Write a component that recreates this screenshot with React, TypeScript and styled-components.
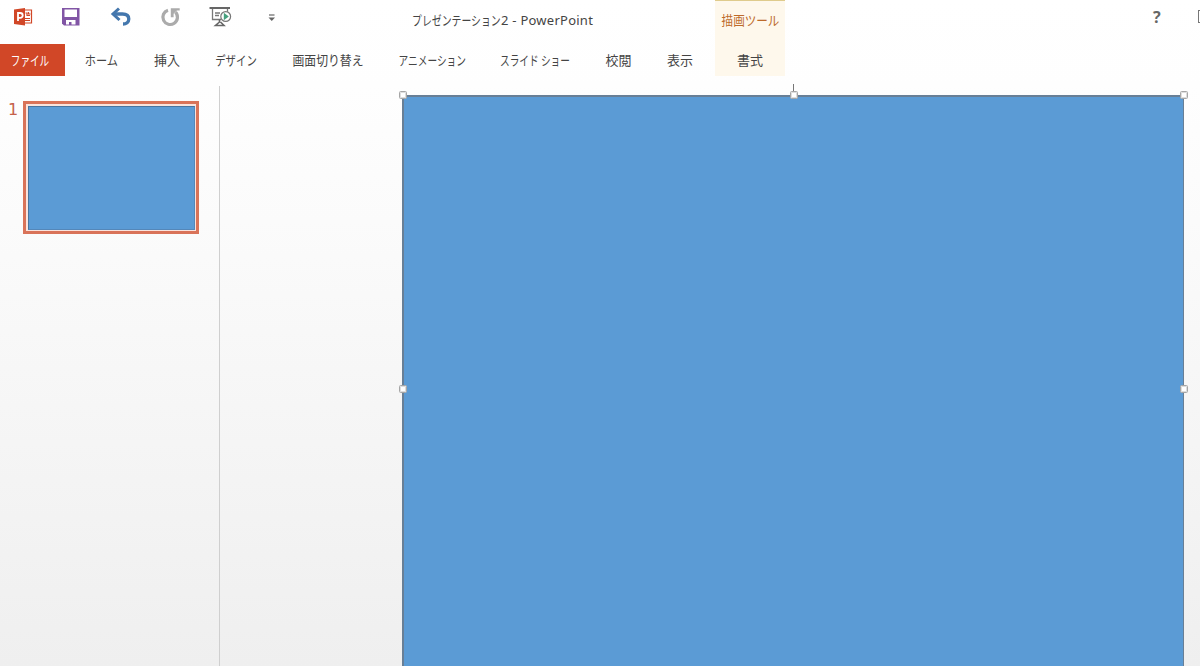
import React from "react";
import styled, { createGlobalStyle } from "styled-components";

const GlobalStyle = createGlobalStyle`
  html, body { margin: 0; height: 100%; overflow: hidden; }
  #root { height: 100%; }
  * { box-sizing: border-box; }
`;

const Window = styled.div`
  height: 666px;
  display: flex;
  flex-direction: column;
  overflow: hidden;
  background: linear-gradient(#fff 0, #fefefe 86px, #fbfbfb 220px, #efefef 666px);
  color: #444;
  font: 13px/20px "Noto Sans", "Noto Sans CJK JP", sans-serif;
`;

const Ribbon = styled.header`
  height: 86px;
  flex: none;
  display: grid;
  grid-template-columns: 292px 423px 70px 1fr;
  grid-template-rows: 44px 32px;
`;

const QuickAccess = styled.div`
  display: flex;
  padding-top: 5px;
`;

const ToolButton = styled.div<{ $w: number }>`
  width: ${(p) => p.$w}px;
  height: 24px;
  svg { display: block; }
`;

const Title = styled.div`
  display: flex;
  padding: 10px 0 0 120px;
  white-space: pre;
`;

const Fit = styled.span<{ $scale?: number; $origin?: string }>`
  display: inline-block;
  white-space: pre;
  font-family: "Noto Sans CJK JP", sans-serif;
  transform: scaleX(${(p) => p.$scale ?? 1});
  transform-origin: ${(p) => p.$origin ?? "center"};
`;

const TitleName = styled.span`
  width: 89px;
`;

const TitleApp = styled.span`
  letter-spacing: 0.25px;
`;

const ContextGroup = styled.div`
  display: flex;
  justify-content: center;
  padding: 9px 0 0 1px;
  background: #fef8ec;
  border-top: 1px solid #dfcb8c;
  color: #bd6a2a;
`;

const WindowControls = styled.div`
  display: flex;
  justify-content: space-between;
  padding: 7px 0 0 368px;
`;

const Help = styled.span`
  font: bold 16px/20px "Noto Sans", sans-serif;
  color: #666;
`;

const RestoreEdge = styled.span`
  width: 2px;
  height: 13px;
  margin-top: 3px;
  border: 1px solid #777;
  border-right: 0;
`;

const Tabs = styled.nav`
  grid-column: 1 / -1;
  display: flex;
`;

const Tab = styled.div<{ $w: number; $kind?: "file" | "context" }>`
  width: ${(p) => p.$w}px;
  flex: none;
  display: flex;
  justify-content: center;
  align-items: center;
  ${(p) => p.$kind === "file" && "background: #d14727; color: #fff; padding-right: 5px; margin-right: 2px;"}
  ${(p) => p.$kind === "context" && "background: #fef8ec; margin-left: 5px;"}
`;

const Workspace = styled.main`
  flex: 1;
  display: flex;
  min-height: 0;
`;

const Thumbnails = styled.aside`
  width: 220px;
  flex: none;
  display: flex;
  align-items: flex-start;
  border-right: 1px solid #cfcfcf;
  padding-top: 15px;
`;

const SlideNumber = styled.span`
  width: 23px;
  padding-left: 8px;
  font: 16px/18px "DejaVu Sans", sans-serif;
  color: #c5614a;
`;

const Thumbnail = styled.div`
  width: 176px;
  height: 133px;
  border: 3px solid #d97359;
  padding: 2px 1px 1px 2px;
  background: #f9e3dd;
`;

const ThumbnailSlide = styled.div`
  height: 100%;
  border: 1px solid #47759f;
  border-right-color: #5487b9;
  border-bottom-color: #5487b9;
  background: #5b9bd5;
`;

const Editor = styled.section`
  flex: 1;
  padding: 9px 0 0 182px;
`;

const Shape = styled.div`
  position: relative;
  width: 782px;
  height: 587px;
  background: #5b9bd5;
  border: 1px solid #687f96;
  border-width: 2px 1px 1px 2px;
`;

const Handle = styled.i<{ $x: number; $y: number }>`
  position: absolute;
  left: ${(p) => p.$x - 6}px;
  top: ${(p) => p.$y - 6}px;
  width: 8px;
  height: 8px;
  border: 1px solid #a6a6a6;
  box-shadow: inset 0 0 0 1px #dedede;
  border-radius: 1.5px;
  background: #fff;
`;

const RotateStem = styled.i`
  position: absolute;
  left: 389px;
  top: -13px;
  width: 1px;
  height: 9px;
  background: #777;
`;

const tabs = [
  { text: "ホーム", w: 69, s: 0.86 },
  { text: "挿入", w: 62, s: 1 },
  { text: "デザイン", w: 77, s: 0.8 },
  { text: "画面切り替え", w: 106, s: 0.91 },
  { text: "アニメーション", w: 102, s: 0.745 },
  { text: "スライド ショー", w: 104, s: 0.745 },
  { text: "校閲", w: 63, s: 1 },
  { text: "表示", w: 60, s: 1 },
];

const PowerPointIcon = () => (
  <svg width="46" height="24" viewBox="0 5 46 24">
    <path d="M24 10h7.500v13H24" fill="#fff" stroke="#d14727" strokeWidth="1.200" />
    <path d="M25.500 13h1.500v2.500h3M28.500 12v2h2M25 18.500h5M25 20.500h5" fill="none" stroke="#d14727" strokeWidth="1.200" />
    <path d="M14 9.500 25 8v17.500L14 24z" fill="#d14727" />
    <path d="M18 21v-8h2.300a2.200 2.200 0 0 1 0 4.800H18" fill="none" stroke="#fff" strokeWidth="1.800" />
  </svg>
);

const SaveIcon = () => (
  <svg width="50" height="24" viewBox="46 5 50 24">
    <path d="M62 8h17.500v17.500H64L62 23.500z" fill="#8155a5" />
    <path d="M64.500 9.500h12.500v7.500H64.500zM66 20h9.500v4.500h-4V22H69v2.500h-3z" fill="#fff" />
  </svg>
);

const UndoIcon = () => (
  <svg width="50" height="24" viewBox="96 5 50 24">
    <path d="M113 14h9.500c4 0 6.300 2 6.300 5s-2.500 5-5.800 5" fill="none" stroke="#4477ad" strokeWidth="3.300" />
    <path d="M119 8.500 113 14l6.500 6" fill="none" stroke="#4477ad" strokeWidth="3" />
  </svg>
);

const RepeatIcon = () => (
  <svg width="50" height="24" viewBox="146 5 50 24">
    <path d="M168 10.200a7.300 7.300 0 1 0 7.500 2" fill="none" stroke="#ababab" strokeWidth="3.200" />
    <path d="M170.800 8.200h8.900v2.300h-2.800l-3.300 3.300v3.400h-2.800z" fill="#ababab" />
  </svg>
);

const SlideshowIcon = () => (
  <svg width="56" height="24" viewBox="196 5 56 24">
    <path d="M209.500 8H230" stroke="#666" strokeWidth="2" />
    <path d="M212.500 9v10.500H221M227.500 9v3M215 13h5M215 15.500h4" fill="none" stroke="#777" strokeWidth="1.300" />
    <path d="M219.500 19.500v2.500l-4 3.500h8.500l-3.500-3.500" fill="none" stroke="#666" strokeWidth="1.600" />
    <circle cx="225.700" cy="16.500" r="4.900" fill="#fff" stroke="#777" strokeWidth="1.200" />
    <path d="M223.800 12.800v7.400l5-3.700z" fill="#46a07e" />
  </svg>
);

const CustomizeIcon = () => (
  <svg width="40" height="24" viewBox="252 5 40 24">
    <path d="M269 15h5.500" stroke="#666" strokeWidth="1.200" />
    <path d="M268.500 17.500h6.500l-3.250 3.500z" fill="#666" />
  </svg>
);

export default function App() {
  return (
    <Window>
      <GlobalStyle />
      <Ribbon>
        <QuickAccess>
          <ToolButton $w={46}><PowerPointIcon /></ToolButton>
          <ToolButton $w={50}><SaveIcon /></ToolButton>
          <ToolButton $w={50}><UndoIcon /></ToolButton>
          <ToolButton $w={50}><RepeatIcon /></ToolButton>
          <ToolButton $w={56}><SlideshowIcon /></ToolButton>
          <ToolButton $w={40}><CustomizeIcon /></ToolButton>
        </QuickAccess>
        <Title>
          <TitleName><Fit $scale={0.76} $origin="left">プレゼンテーション</Fit></TitleName>
          <TitleApp>2 - PowerPoint</TitleApp>
        </Title>
        <ContextGroup><Fit $scale={0.89}>描画ツール</Fit></ContextGroup>
        <WindowControls>
          <Help>?</Help>
          <RestoreEdge />
        </WindowControls>
        <Tabs>
          <Tab $w={65} $kind="file"><Fit $scale={0.74}>ファイル</Fit></Tab>
          {tabs.map((t) => (
            <Tab key={t.text} $w={t.w}><Fit $scale={t.s}>{t.text}</Fit></Tab>
          ))}
          <Tab $w={70} $kind="context"><Fit>書式</Fit></Tab>
        </Tabs>
      </Ribbon>
      <Workspace>
        <Thumbnails>
          <SlideNumber>1</SlideNumber>
          <Thumbnail><ThumbnailSlide /></Thumbnail>
        </Thumbnails>
        <Editor>
          <Shape>
            <RotateStem />
            <Handle $x={1} $y={0} />
            <Handle $x={392} $y={0} />
            <Handle $x={782} $y={0} />
            <Handle $x={1} $y={294} />
            <Handle $x={782} $y={294} />
          </Shape>
        </Editor>
      </Workspace>
    </Window>
  );
}
